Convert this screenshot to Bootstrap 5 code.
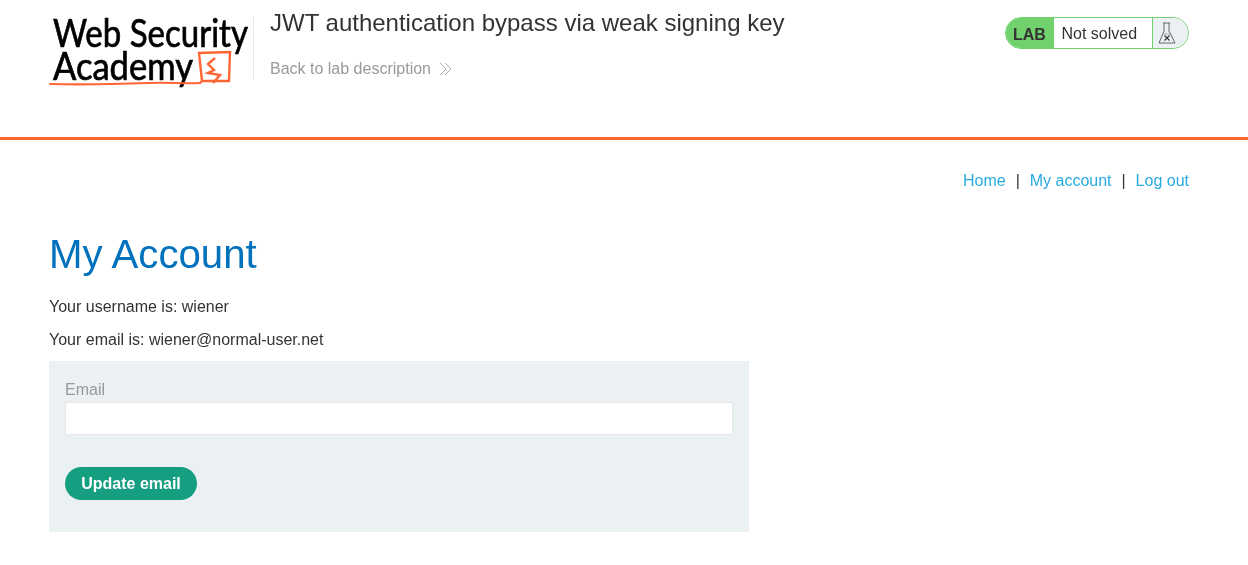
<!DOCTYPE html>
<html lang="en">
<head>
<meta charset="utf-8">
<title>JWT authentication bypass via weak signing key</title>
<link href="https://cdn.jsdelivr.net/npm/bootstrap@5.3.0/dist/css/bootstrap.min.css" rel="stylesheet">
<style>
html, body { height: 100%; }
body { font-family: "Liberation Sans", Arial, sans-serif; font-size: 16px; color: #333332; background: #fff; overflow: hidden; will-change: transform; }
.lab-head { height: 140px; border-bottom: 3px solid #ff6633; padding: 0 59px 0 49px; }
.brand-wrap { width: 205px; height: 64px; margin-top: 16px; border-right: 1px solid #e6e9ec; flex: none; }
.brand-wrap svg { display: block; overflow: visible; }
.logo-txt { font-family: Lato, "Open Sans", sans-serif; font-weight: 400; fill: #000; stroke: #000; stroke-width: .7px; }
.lab-titles { padding-left: 16px; }
.lab-title { font-size: 24px; line-height: 28px; margin: 9px 0 0; font-weight: 400; color: #333332; }
.back-link { display: inline-flex; align-items: center; gap: 8px; margin-top: 22px; line-height: 20px; color: #999; text-decoration: none; }
.status-pill { margin-top: 17px; width: 184px; height: 32px; border: 1px solid #70d16d; border-radius: 16px; overflow: hidden; flex: none; }
.status-lab { width: 48px; background: #70d16d; font-weight: 700; color: #333332; padding-left: 7px; padding-top: 2px; line-height: 30px; }
.status-text { width: 99px; line-height: 30px; padding-left: 7.5px; padding-top: 1px; border-right: 1px solid #70d16d; background: #fff; }
.status-icon { flex: 1; background: #ebf0f2; }
.page-main { padding: 0 59px 0 49px; }
.top-links { padding-top: 31px; line-height: 20px; }
.top-links a { color: #29abe2; text-decoration: none; }
.top-links .sep { margin: 0 5.5px; color: #333332; }
.acct-title { color: #0071bc; font-size: 40.2px; line-height: 50px; margin: 39px 0 17px; font-weight: 400; }
.acct-line { line-height: 20px; margin: 0 0 13px; }
.email-panel { width: 700px; height: 171px; margin-top: -2px; background: #ebf0f2; padding: 20px 16px 0; }
.email-label { display: block; color: #999; line-height: 18px; margin-bottom: 3px; }
.email-input { display: block; width: 100%; height: 33px; border: 1px solid #e6e6e6; background: #fff; border-radius: 0; padding: 0 8px; outline: 0; }
.update-btn { display: block; margin-top: 32px; height: 33px; width: 132px; padding: 0; border: 0; border-radius: 17px; background: #159e80; color: #fff; font-weight: 700; line-height: 33px; }
</style>
</head>
<body>
<header class="lab-head d-flex justify-content-between align-items-start">
  <div class="d-flex align-items-start">
    <div class="brand-wrap">
      <svg width="204" height="72" viewBox="0 0 204 72" role="img" aria-label="Web Security Academy">
        <text class="logo-txt" x="4" y="31" font-size="38" textLength="195" lengthAdjust="spacingAndGlyphs">Web Security</text>
        <text class="logo-txt" x="4" y="64" font-size="38" textLength="140" lengthAdjust="spacingAndGlyphs">Academy</text>
        <path d="M1 68 C40 69 70 68 100 67 C120 66 135 68 151 67" fill="none" stroke="#ff6633" stroke-width="2.2" stroke-linecap="round"/>
        <path d="M151 67 L153 65 L150 37 L181 36 L180 65 L154 65" fill="none" stroke="#ff6633" stroke-width="2.4"/>
        <path d="M166 42 L159 48 L165 54 L159 57 L171 59 L164 67" fill="none" stroke="#ff6633" stroke-width="2.4"/>
      </svg>
    </div>
    <div class="lab-titles">
      <h2 class="lab-title">JWT authentication bypass via weak signing key</h2>
      <a class="back-link" href="#">Back to lab description
        <svg width="13" height="14" viewBox="0 0 13 14" aria-hidden="true"><path d="M1 1 L7 7 L1 13 M6 1 L12 7 L6 13" fill="none" stroke="#aaa" stroke-width="1"/></svg>
      </a>
    </div>
  </div>
  <div class="status-pill d-flex">
    <div class="status-lab">LAB</div>
    <div class="status-text">Not solved</div>
    <div class="status-icon d-flex align-items-center ps-1">
      <svg width="20" height="22" viewBox="0 0 20 22" aria-hidden="true">
        <path d="M6 1 H13 M7 1 V9 L2 21 H18 L12 9 V1" fill="none" stroke="#555" stroke-width=".9"/>
        <path d="M5 12 H15" stroke="#aaa" stroke-width="1" fill="none"/>
        <path d="M7.5 13.5 L12.5 18.5 M12.5 13.5 L7.5 18.5" stroke="#333332" stroke-width="1.1" fill="none"/>
      </svg>
    </div>
  </div>
</header>
<main class="page-main">
  <nav class="top-links text-end">
    <a href="#">Home</a><span class="sep">&nbsp;|&nbsp;</span><a href="#">My account</a><span class="sep">&nbsp;|&nbsp;</span><a href="#">Log out</a>
  </nav>
  <h1 class="acct-title">My Account</h1>
  <p class="acct-line">Your username is: wiener</p>
  <p class="acct-line">Your email is: wiener@normal-user.net</p>
  <form class="email-panel">
    <label class="email-label" for="em">Email</label>
    <input class="email-input" id="em" type="email">
    <button class="update-btn" type="button">Update email</button>
  </form>
</main>
<script src="https://cdn.jsdelivr.net/npm/bootstrap@5.3.0/dist/js/bootstrap.bundle.min.js"></script>
</body>
</html>
